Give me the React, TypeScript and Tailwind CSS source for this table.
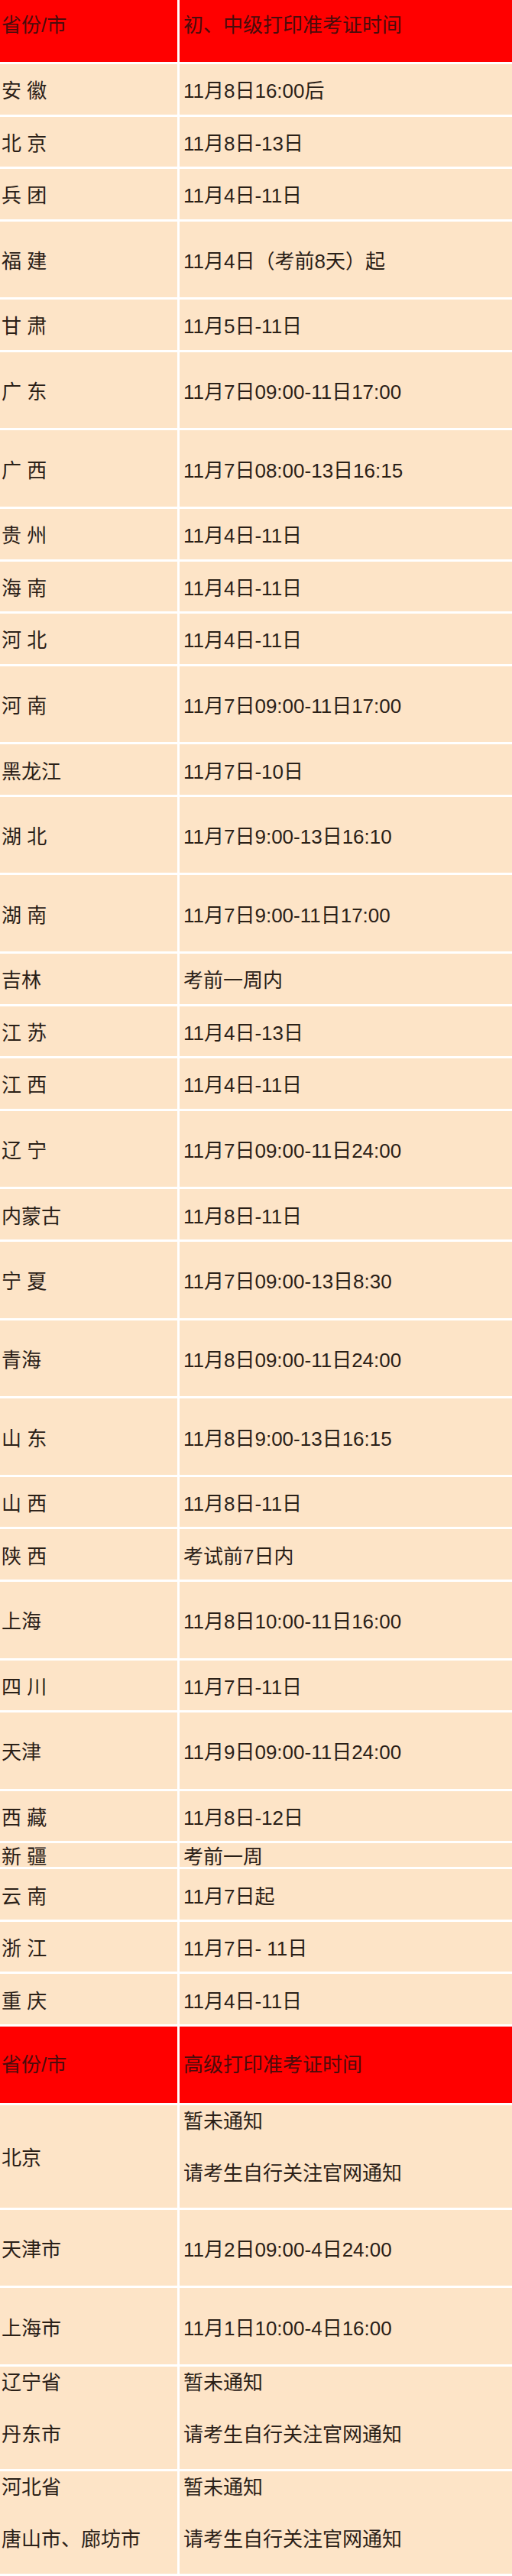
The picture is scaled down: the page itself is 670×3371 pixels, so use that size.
import React from 'react';

type Row = { left: string[]; right: string[]; units: number };

// one "unit" is ~34.2px of row pitch; cell height = units * 34.23 - 3px gap
const heights: Record<number, string> = {
  1: 'h-[31.2px]',
  2: 'h-[65.5px]',
  3: 'h-[99.7px]',
  4: 'h-[133.9px]',
};

const r = (left: string, right: string, units = 2): Row => ({ left: [left], right: [right], units });

const basicRows: Row[] = [
  r('安 徽', '11月8日16:00后'),
  r('北 京', '11月8日-13日'),
  r('兵 团', '11月4日-11日'),
  r('福 建', '11月4日（考前8天）起', 3),
  r('甘 肃', '11月5日-11日'),
  r('广 东', '11月7日09:00-11日17:00', 3),
  r('广 西', '11月7日08:00-13日16:15', 3),
  r('贵 州', '11月4日-11日'),
  r('海 南', '11月4日-11日'),
  r('河 北', '11月4日-11日'),
  r('河 南', '11月7日09:00-11日17:00', 3),
  r('黑龙江', '11月7日-10日'),
  r('湖 北', '11月7日9:00-13日16:10', 3),
  r('湖 南', '11月7日9:00-11日17:00', 3),
  r('吉林', '考前一周内'),
  r('江 苏', '11月4日-13日'),
  r('江 西', '11月4日-11日'),
  r('辽 宁', '11月7日09:00-11日24:00', 3),
  r('内蒙古', '11月8日-11日'),
  r('宁 夏', '11月7日09:00-13日8:30', 3),
  r('青海', '11月8日09:00-11日24:00', 3),
  r('山 东', '11月8日9:00-13日16:15', 3),
  r('山 西', '11月8日-11日'),
  r('陕 西', '考试前7日内'),
  r('上海', '11月8日10:00-11日16:00', 3),
  r('四 川', '11月7日-11日'),
  r('天津', '11月9日09:00-11日24:00', 3),
  r('西 藏', '11月8日-12日'),
  r('新 疆', '考前一周', 1),
  r('云 南', '11月7日起'),
  r('浙 江', '11月7日- 11日'),
  r('重 庆', '11月4日-11日'),
];

const advancedRows: Row[] = [
  { left: ['北京'], right: ['暂未通知', '', '请考生自行关注官网通知'], units: 4 },
  r('天津市', '11月2日09:00-4日24:00', 3),
  r('上海市', '11月1日10:00-4日16:00', 3),
  { left: ['辽宁省', '', '丹东市'], right: ['暂未通知', '', '请考生自行关注官网通知'], units: 4 },
  { left: ['河北省', '', '唐山市、廊坊市'], right: ['暂未通知', '', '请考生自行关注官网通知'], units: 4 },
];

const Cell: React.FC<{ lines: string[]; units: number; right?: boolean }> = ({ lines, units, right }) => {
  const multi = lines.length > 1;
  return (
    <div
      className={`bg-[#fde4c7] text-[#2a2017] flex flex-col ${heights[units]} ${
        multi ? 'justify-start pt-[4px]' : 'justify-center pt-[5px]'
      } ${right ? 'pl-[5px]' : 'pl-[2px]'}`}
    >
      {lines.map((line, i) => (
        <div key={i} className="h-[34px] leading-[34px] whitespace-nowrap">
          {line}
        </div>
      ))}
    </div>
  );
};

const Header: React.FC<{ title: string; first?: boolean }> = ({ title, first }) => (
  <>
    <div
      className={`bg-[#ff0000] text-[#4a0c0c] pl-[2px] flex ${
        first ? 'h-[81px] items-start pt-[16px]' : 'h-[99.7px] items-center'
      }`}
    >
      <span className="leading-[34px]">省份/市</span>
    </div>
    <div
      className={`bg-[#ff0000] text-[#4a0c0c] pl-[5px] flex ${
        first ? 'h-[81px] items-start pt-[16px]' : 'h-[99.7px] items-center'
      }`}
    >
      <span className="leading-[34px]">{title}</span>
    </div>
  </>
);

export default function App() {
  return (
    <div className="w-[670px] bg-white font-['Liberation_Sans','Noto_Sans_CJK_SC',sans-serif] text-[26px]">
      <div className="grid grid-cols-[232px_1fr] gap-[3px] bg-white">
        <Header title="初、中级打印准考证时间" first />
        {basicRows.map((row, i) => (
          <React.Fragment key={`b${i}`}>
            <Cell lines={row.left} units={row.units} />
            <Cell lines={row.right} units={row.units} right />
          </React.Fragment>
        ))}
        <Header title="高级打印准考证时间" />
        {advancedRows.map((row, i) => (
          <React.Fragment key={`a${i}`}>
            <Cell lines={row.left} units={row.units} />
            <Cell lines={row.right} units={row.units} right />
          </React.Fragment>
        ))}
      </div>
    </div>
  );
}
